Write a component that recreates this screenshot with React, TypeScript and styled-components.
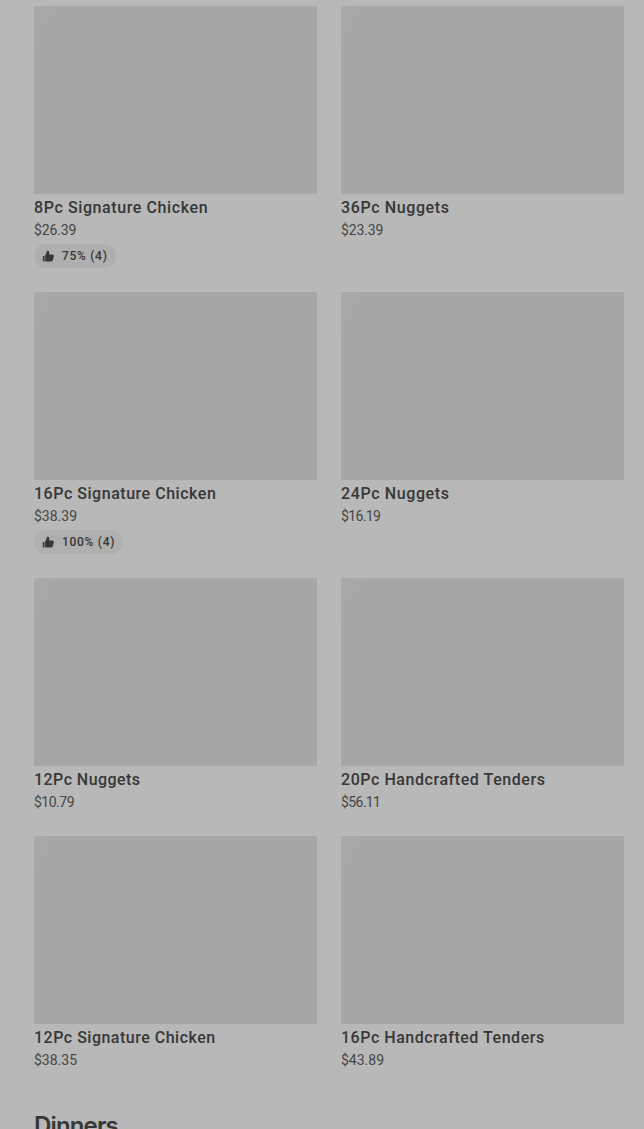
import styled, { createGlobalStyle } from "styled-components";

interface IItem {
  name: string;
  price: string;
  rating?: string;
  nameSpacing?: number;
  priceSpacing?: number;
}
interface ITextProps {
  $spacing?: number;
}

const GlobalStyle = createGlobalStyle`
  * {
    box-sizing: border-box;
  }
  body {
    margin: 0;
    height: 1129px;
    overflow: hidden;
    background-color: #b8b8b8;
    color: #373737;
    font-family: Roboto, "Liberation Sans", sans-serif;
  }
`;

const Wrapper = styled.main`
  height: 1129px;
  padding: 6px 20px 0 34px;
  overflow: hidden;
`;

const Grid = styled.div`
  display: grid;
  grid-template-columns: 1fr 1fr;
  gap: 24px;
`;

const Card = styled.article`
  display: flex;
  flex-direction: column;
  align-items: flex-start;
`;

const Photo = styled.div`
  width: 100%;
  height: 188px;
  background: linear-gradient(120deg, #a9a9a9 0, #a6a6a6 28px);
`;

const Name = styled.h3<ITextProps>`
  margin: 2px 0 0;
  font-size: 16px;
  font-weight: 500;
  line-height: 24px;
  letter-spacing: ${(props) => props.$spacing ?? 0.53}px;
  white-space: nowrap;
`;

const Price = styled.span<ITextProps>`
  font-size: 14px;
  line-height: 20px;
  letter-spacing: ${(props) => props.$spacing ?? 0}px;
  color: #464646;
`;

const Rating = styled.div`
  display: flex;
  align-items: center;
  gap: 8px;
  height: 24px;
  margin-top: 4px;
  padding: 0 8px;
  border-radius: 12px;
  background-color: #afafaf;
  font-size: 12px;
  font-weight: 500;
  letter-spacing: 0.7px;
  svg {
    width: 12px;
    height: 12px;
  }
`;

const SectionTitle = styled.h2`
  margin: 40px 0 0;
  font-family: Inter, "Liberation Sans", sans-serif;
  font-size: 24px;
  font-weight: 600;
  line-height: 32px;
  letter-spacing: -0.85px;
`;

const items: IItem[] = [
  {
    name: "8Pc Signature Chicken",
    price: "$26.39",
    rating: "75% (4)",
    nameSpacing: 0.6,
    priceSpacing: -0.15,
  },
  {
    name: "36Pc Nuggets",
    price: "$23.39",
    nameSpacing: 0.62,
    priceSpacing: -0.15,
  },
  { name: "16Pc Signature Chicken", price: "$38.39", rating: "100% (4)" },
  {
    name: "24Pc Nuggets",
    price: "$16.19",
    nameSpacing: 0.62,
    priceSpacing: -0.65,
  },
  {
    name: "12Pc Nuggets",
    price: "$10.79",
    nameSpacing: 0.45,
    priceSpacing: -0.5,
  },
  {
    name: "20Pc Handcrafted Tenders",
    price: "$56.11",
    nameSpacing: 0.56,
    priceSpacing: -0.65,
  },
  { name: "12Pc Signature Chicken", price: "$38.35", nameSpacing: 0.5 },
  { name: "16Pc Handcrafted Tenders", price: "$43.89" },
];

function ThumbUp() {
  return (
    <svg viewBox="0 0 12 12" fill="currentColor">
      <path d="M.8 6h1.7v5.5H.8zM3.2 5.6 5.4.6c1.1 0 1.8.8 1.8 1.8v2.1h3.2c1 0 1.6.8 1.4 1.7l-.9 3.9c-.2.8-.8 1.4-1.7 1.4h-6z" />
    </svg>
  );
}

function App() {
  return (
    <Wrapper>
      <GlobalStyle />
      <Grid>
        {items.map((item) => (
          <Card key={item.name}>
            <Photo />
            <Name $spacing={item.nameSpacing}>{item.name}</Name>
            <Price $spacing={item.priceSpacing}>{item.price}</Price>
            {item.rating && (
              <Rating>
                <ThumbUp />
                {item.rating}
              </Rating>
            )}
          </Card>
        ))}
      </Grid>
      <SectionTitle>Dinners</SectionTitle>
    </Wrapper>
  );
}

export default App;
